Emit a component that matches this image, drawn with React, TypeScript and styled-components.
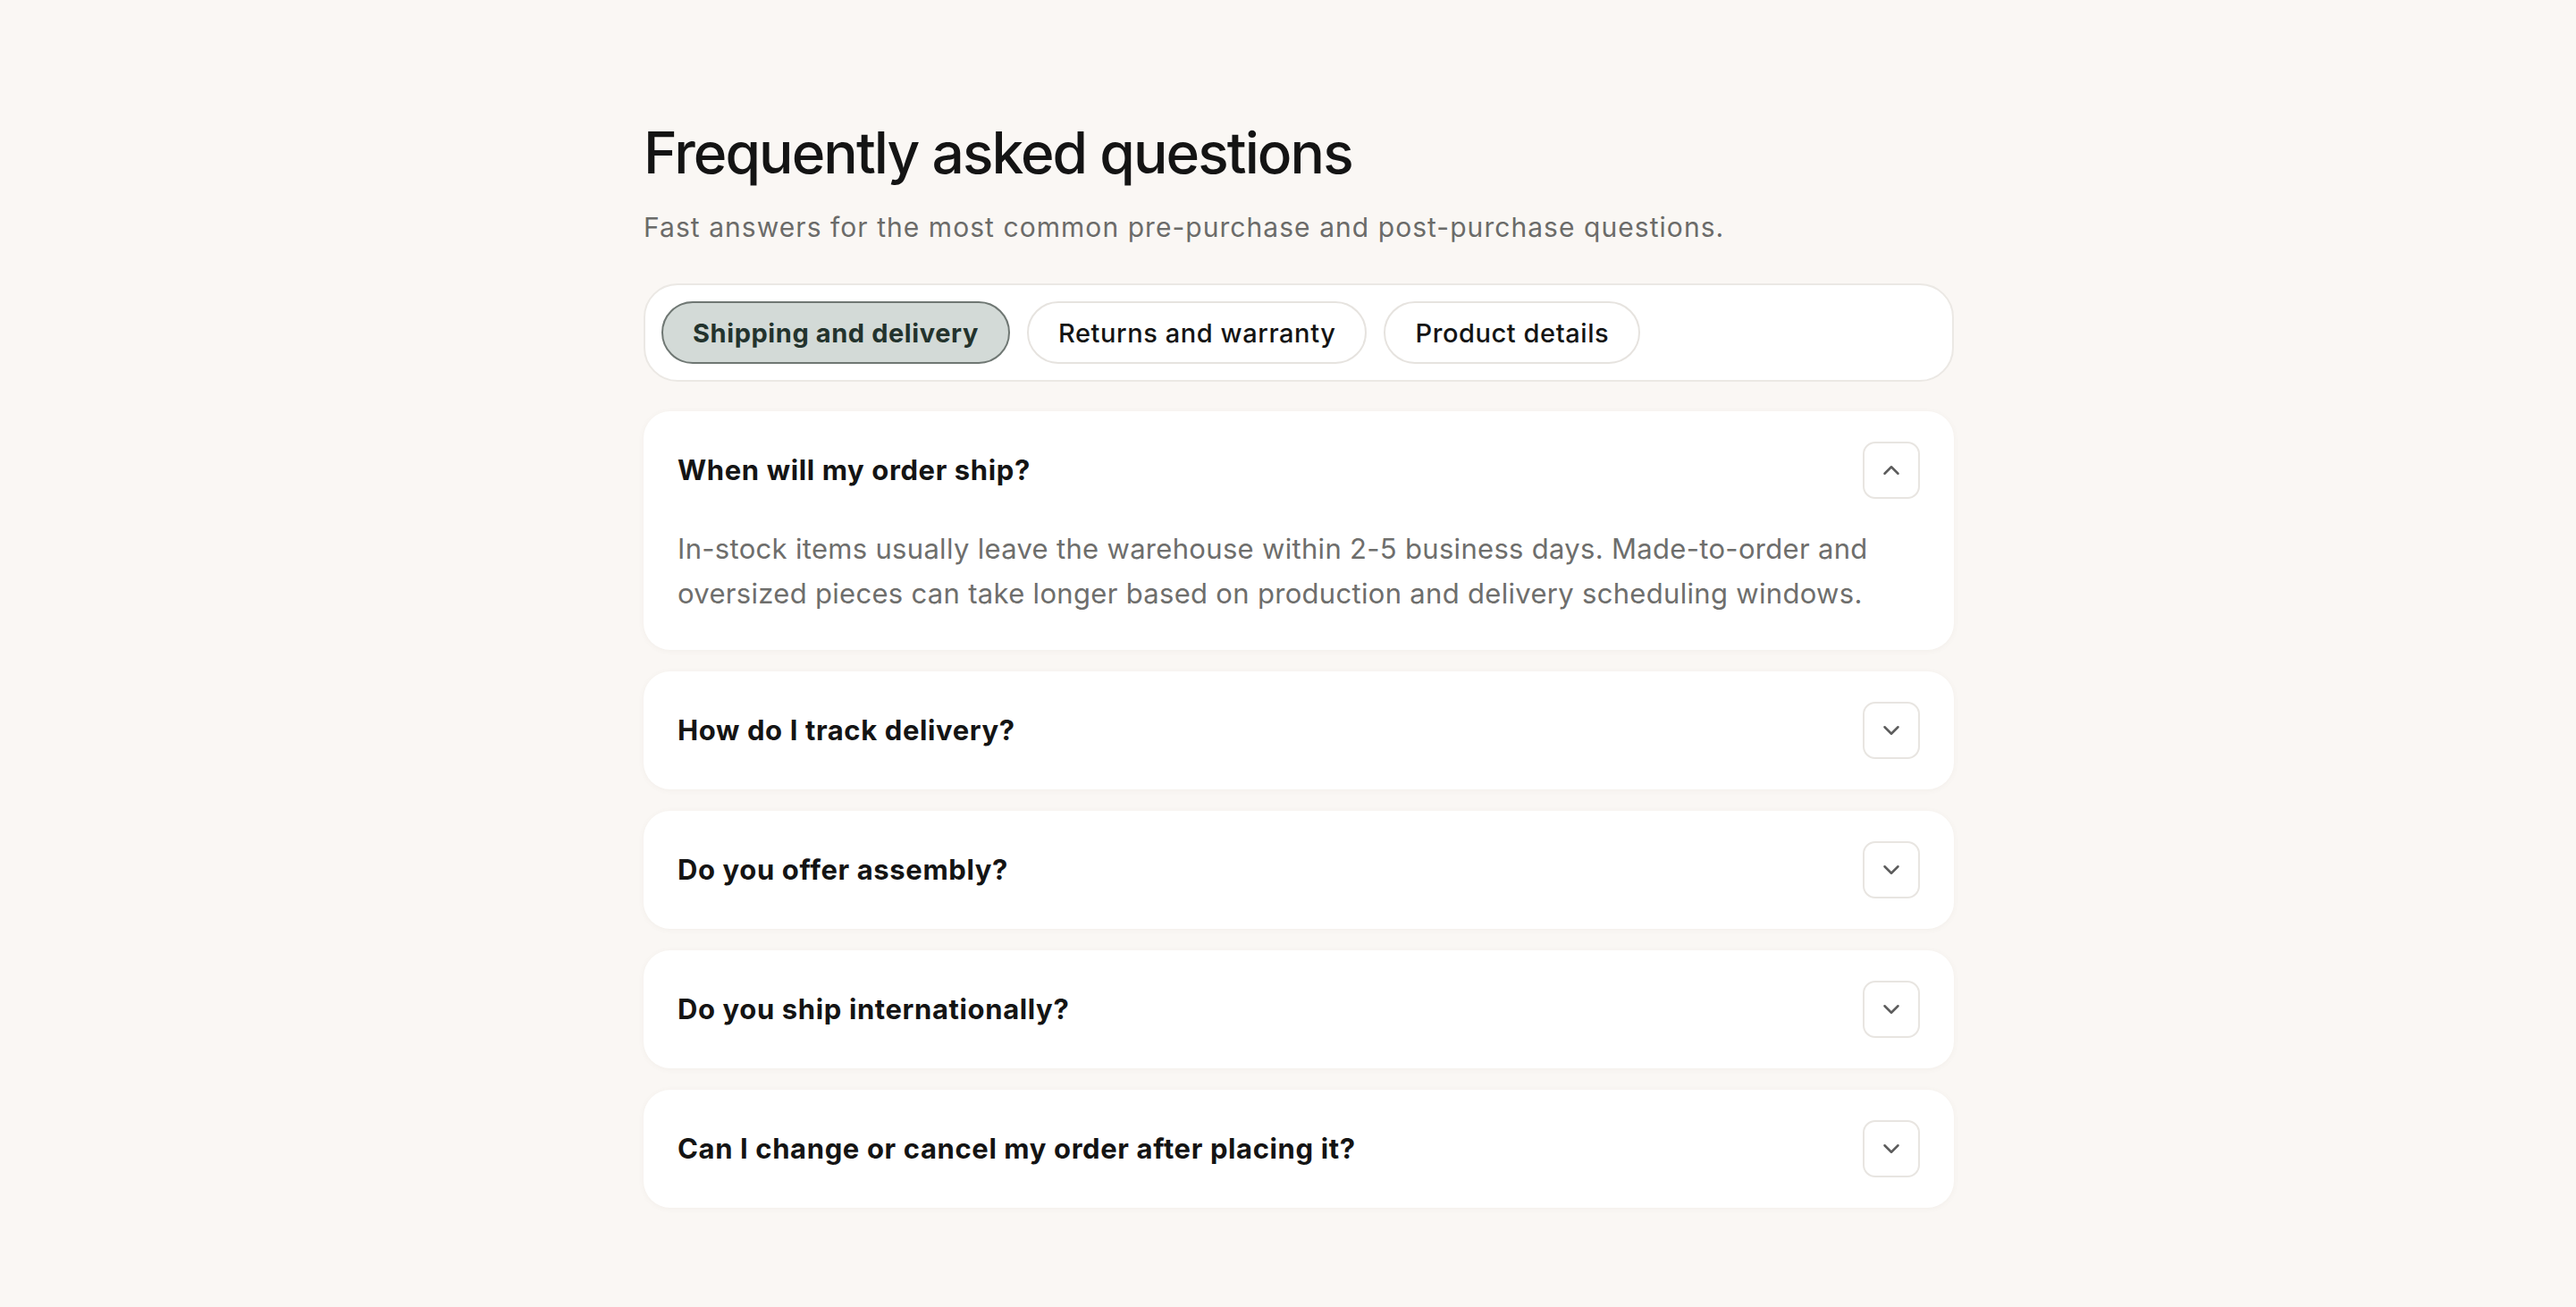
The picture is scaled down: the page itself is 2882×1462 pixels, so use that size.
import React, { useState } from 'react';
import styled, { createGlobalStyle } from 'styled-components';
import { ChevronDown, ChevronUp } from 'lucide-react';

const GlobalStyle = createGlobalStyle`
  html, body {
    margin: 0;
    padding: 0;
    background: #faf7f4;
  }
  body {
    font-family: Inter, "Noto Sans", sans-serif;
    color: #141414;
  }
`;

interface FaqItem {
  question: string;
  answer: string;
}

const tabs = ['Shipping and delivery', 'Returns and warranty', 'Product details'];

const items: FaqItem[] = [
  {
    question: 'When will my order ship?',
    answer:
      'In-stock items usually leave the warehouse within 2-5 business days. Made-to-order and oversized pieces can take longer based on production and delivery scheduling windows.',
  },
  {
    question: 'How do I track delivery?',
    answer: 'You will receive a tracking link by email as soon as your order leaves the warehouse.',
  },
  {
    question: 'Do you offer assembly?',
    answer: 'Assembly is available for select items in supported delivery areas.',
  },
  {
    question: 'Do you ship internationally?',
    answer: 'We currently ship to a limited number of countries. Rates are shown at checkout.',
  },
  {
    question: 'Can I change or cancel my order after placing it?',
    answer: 'Changes are possible until the order is prepared for shipment.',
  },
];

const App = () => {
  const [activeTab, setActiveTab] = useState(0);
  const [open, setOpen] = useState(0);

  return (
    <Page>
      <GlobalStyle />
      <Section>
        <Title>Frequently asked questions</Title>
        <Subtitle>Fast answers for the most common pre-purchase and post-purchase questions.</Subtitle>

        <TabBar>
          {tabs.map((tab, i) => (
            <Tab key={tab} active={i === activeTab} onClick={() => setActiveTab(i)}>
              {tab}
            </Tab>
          ))}
        </TabBar>

        <List>
          {items.map((item, i) => {
            const isOpen = i === open;
            return (
              <Card key={item.question}>
                <CardHeader onClick={() => setOpen(isOpen ? -1 : i)}>
                  <Question>{item.question}</Question>
                  <ToggleButton aria-label={isOpen ? 'Collapse' : 'Expand'}>
                    {isOpen ? <ChevronUp size={30} strokeWidth={2} /> : <ChevronDown size={30} strokeWidth={2} />}
                  </ToggleButton>
                </CardHeader>
                {isOpen && <Answer>{item.answer}</Answer>}
              </Card>
            );
          })}
        </List>
      </Section>
    </Page>
  );
};

const Page = styled.main`
  min-height: 100vh;
  display: flex;
  justify-content: center;
  padding: 136px 0 80px 24px;
  box-sizing: border-box;
`;

const Section = styled.section`
  width: 1466px;
  display: flex;
  flex-direction: column;
`;

const Title = styled.h1`
  margin: 0;
  font-size: 64px;
  line-height: 70px;
  font-weight: 500;
  letter-spacing: -0.03em;
  color: #141414;
`;

const Subtitle = styled.p`
  margin: 28px 0 0;
  font-size: 30px;
  line-height: 40px;
  font-weight: 400;
  letter-spacing: 0.035em;
  color: #6b6b69;
`;

const TabBar = styled.div`
  margin-top: 43px;
  display: flex;
  gap: 19px;
  padding: 18px;
  background: #fff;
  border: 2px solid #ebe8e4;
  border-radius: 38px;
`;

const Tab = styled.button<{ active: boolean }>`
  height: 70px;
  padding: 0 33px;
  border-radius: 35px;
  font-family: inherit;
  font-size: 29px;
  letter-spacing: 0.02em;
  font-weight: ${p => (p.active ? 700 : 500)};
  color: ${p => (p.active ? '#23332d' : '#141414')};
  background: ${p => (p.active ? '#d3dad7' : '#fff')};
  border: 2px solid ${p => (p.active ? '#6f7773' : '#e6e3df')};
  cursor: pointer;
`;

const List = styled.div`
  margin-top: 33px;
  display: flex;
  flex-direction: column;
  gap: 24px;
`;

const Card = styled.div`
  background: #fff;
  border-radius: 30px;
  padding: 34px 38px;
  box-shadow: 0 1px 6px rgba(120, 100, 80, 0.06);
`;

const CardHeader = styled.div`
  display: flex;
  align-items: center;
  justify-content: space-between;
  gap: 24px;
  cursor: pointer;
`;

const Question = styled.h3`
  margin: 0;
  font-size: 31px;
  line-height: 40px;
  font-weight: 700;
  letter-spacing: 0.02em;
  color: #141414;
`;

const ToggleButton = styled.button`
  width: 64px;
  height: 64px;
  flex-shrink: 0;
  display: flex;
  align-items: center;
  justify-content: center;
  background: #fff;
  border: 2px solid #e8e5e1;
  border-radius: 14px;
  color: #5c5c5c;
  cursor: pointer;
  padding: 0;
`;

const Answer = styled.p`
  margin: 31px 0 4px;
  font-size: 31px;
  line-height: 50px;
  letter-spacing: 0.01em;
  color: #6e6e6c;
`;

export default App;
